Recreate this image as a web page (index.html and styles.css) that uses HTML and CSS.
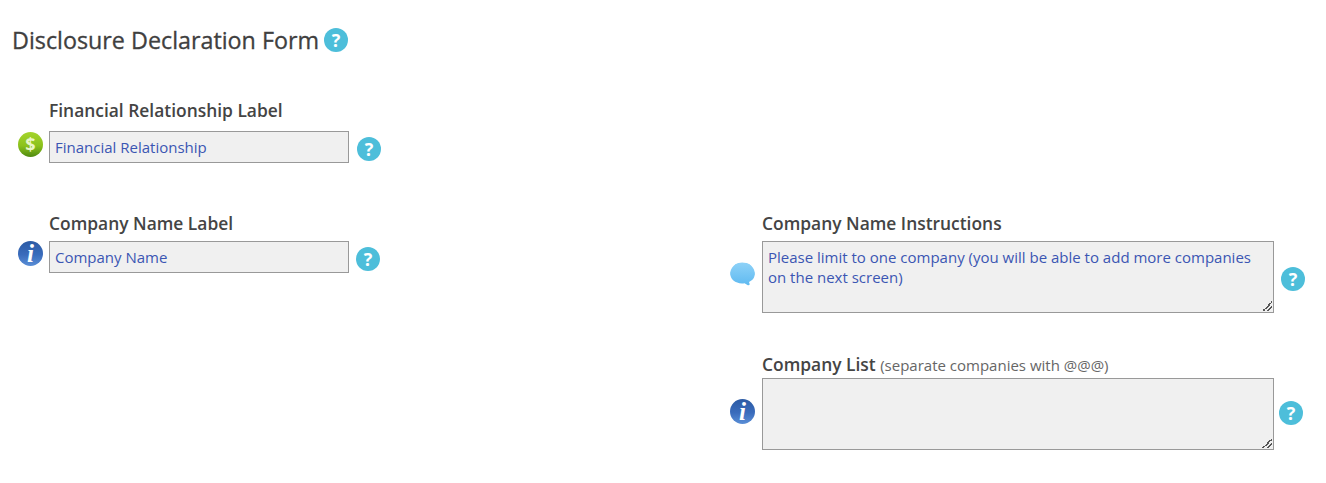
FILE: index.html
```html
<!DOCTYPE html>
<html lang="en">
<head>
    <meta charset="UTF-8">
    <meta name="viewport" content="width=device-width, initial-scale=1.0">
    <title>Disclosure Declaration Form</title>
    <link rel="stylesheet" href="styles.css">
</head>
<body>
    <h1 class="form-title">Disclosure Declaration Form <span class="help help--title">?</span></h1>

    <div class="form-grid">
        <div class="field field--first">
            <label class="field-label" for="financialLabel">Financial Relationship Label</label>
            <span class="field-icon icon-dollar">$</span>
            <input class="field-input" id="financialLabel" type="text" value="Financial Relationship">
            <span class="help help--short">?</span>
        </div>
        <div class="spacer"></div>

        <div class="field field--second">
            <label class="field-label" for="companyLabel">Company Name Label</label>
            <span class="field-icon field-icon--top icon-info">i</span>
            <input class="field-input" id="companyLabel" type="text" value="Company Name">
            <span class="help help--short help--near">?</span>
        </div>

        <div class="field field--wide field--second">
            <label class="field-label" for="companyInstructions">Company Name Instructions</label>
            <svg class="field-icon field-icon--mid" viewBox="0 0 25 25">
                <defs>
                    <linearGradient id="bubbleFill" x1="0" y1="0" x2="0" y2="1">
                        <stop offset="0" stop-color="#8ed2f8"/>
                        <stop offset="1" stop-color="#5cb8f0"/>
                    </linearGradient>
                </defs>
                <path d="M12 0.5C18.8 0.5 25 3.6 25 10.8C25 15.6 22.4 18.6 19 20L20.6 25L14.6 21.2C13.8 21.3 12.9 21.4 12 21.4C5.2 21.4 0 17.2 0 10.8C0 4.4 5.2 0.5 12 0.5Z" fill="url(#bubbleFill)"/>
            </svg>
            <textarea class="field-text" id="companyInstructions">Please limit to one company (you will be able to add more companies on the next screen)</textarea>
            <span class="help help--tall">?</span>
        </div>

        <div class="spacer"></div>

        <div class="field field--wide field--third">
            <label class="field-label" for="companyList">Company List <span class="field-hint">(separate companies with @@@)</span></label>
            <span class="field-icon field-icon--mid icon-info">i</span>
            <textarea class="field-text" id="companyList"></textarea>
            <span class="help help--tall help--near">?</span>
        </div>
    </div>
</body>
</html>
```

FILE: styles.css
```css
* {
    margin: 0;
    padding: 0;
    box-sizing: border-box;
}

body {
    font-family: 'Open Sans', 'Liberation Sans', sans-serif;
    background: #fff;
    color: #3d3d3d;
    overflow: hidden;
}

.form-title {
    display: flex;
    align-items: center;
    gap: 5px;
    height: 24px;
    margin: 28px 0 47px 12px;
    font-size: 23.3px;
    font-weight: 400;
    line-height: 24px;
    color: #404040;
    -webkit-text-stroke: 0.3px #404040;
}

.form-grid {
    display: grid;
    grid-template-columns: 712px 1fr;
    align-items: start;
    padding-left: 18px;
}

.field {
    display: grid;
    grid-template-columns: 31px max-content max-content;
    align-items: start;
    justify-content: start;
}

.field--wide {
    grid-template-columns: 32px max-content max-content;
}

.field--first {
    margin-bottom: 49px;
}

.field--second {
    margin-bottom: 40px;
}

.field-label {
    grid-column: 2 / 4;
    height: 22px;
    font-size: 17.4px;
    font-weight: 600;
    line-height: 22px;
    color: #444;
}

.field--first .field-label {
    margin-bottom: 10px;
}

.field--second .field-label {
    margin-bottom: 7px;
}

.field--third .field-label {
    margin-bottom: 3px;
}

.field-hint {
    font-size: 15px;
    font-weight: 400;
    color: #666;
}

.field-icon {
    display: flex;
    align-items: center;
    justify-content: center;
    width: 25px;
    height: 25px;
    margin-top: 1px;
    border-radius: 50%;
    color: #fff;
    line-height: 25px;
}

.field-icon--top {
    margin-top: 0;
}

.field-icon--mid {
    margin-top: 21px;
}

.icon-dollar {
    background: linear-gradient(#a4d42c, #8cc21c 55%, #4f8a10);
    color: #eaf6c8;
    font-size: 18px;
    font-weight: 700;
}

.icon-info {
    background: linear-gradient(#2b5aa4, #3a6cbc 55%, #5a8ed6);
    font-family: 'Liberation Serif', serif;
    font-size: 25px;
    font-style: italic;
    font-weight: 700;
}

.field-input,
.field-text {
    display: block;
    border: 1px solid #999;
    background: #f0f0f0;
    color: #3b56b3;
    font-family: inherit;
    font-size: 15px;
    border-radius: 0;
    outline: none;
}

.field-input {
    width: 300px;
    height: 32px;
    padding: 0 5px;
}

.field-text {
    width: 512px;
    height: 72px;
    padding: 5px;
    line-height: 20px;
    resize: both;
}

.field-text::-webkit-resizer {
    background: linear-gradient(135deg, transparent 50%, #555 50%, #555 60%, transparent 60%, transparent 74%, #555 74%, #555 84%, transparent 84%) no-repeat right 1px bottom 1px / 10px 10px;
}

.help {
    display: flex;
    align-items: center;
    justify-content: center;
    flex: none;
    width: 24px;
    height: 24px;
    border-radius: 50%;
    background: #4dbeda;
    color: #fff;
    font-size: 18px;
    font-weight: 700;
    line-height: 24px;
    -webkit-text-stroke: 0;
}

.help--short {
    margin: 6px 0 0 8px;
}

.help--tall {
    margin: 26px 0 0 7px;
}

.help--short.help--near {
    margin-left: 7px;
}

.help--tall.help--near {
    margin: 23px 0 0 5px;
}
```
